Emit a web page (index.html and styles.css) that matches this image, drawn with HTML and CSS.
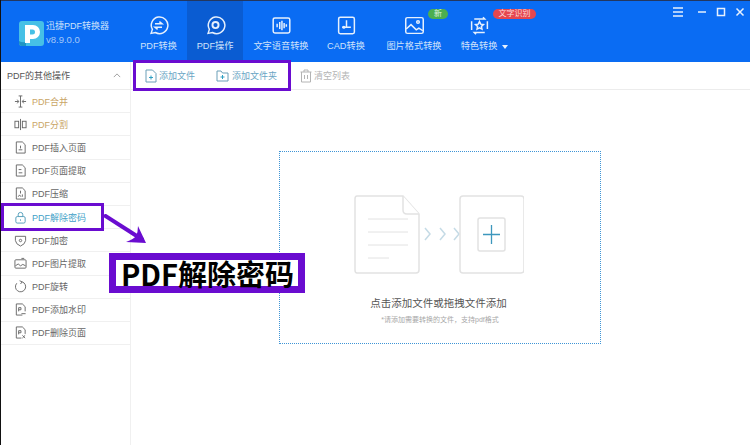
FILE: index.html
```html
<!DOCTYPE html>
<html>
<head>
  <title>迅捷PDF转换器</title>
  <meta charset="utf-8">
  <link rel="stylesheet" href="styles.css">
</head>
<body>
  <div id="app">
    <div id="head">
      <div class="brand">
        <svg class="logo" viewBox="0 0 25 25" width="25" height="25">
          <rect width="25" height="25" rx="3" fill="#46c0e6"/>
          <path d="M0 20 Q3 22 7 21 V25 H3 Q0 25 0 22Z" fill="#1f95c4"/>
          <path fill-rule="evenodd" d="M6 22 V4 H14 A7 7 0 0 1 14 18 H11 V22Z M11 8.500 V13.500 H13.500 A2.500 2.500 0 0 0 13.500 8.500Z" fill="#fff"/>
        </svg>
        <div class="brand-text">
          <div class="brand-name">迅捷PDF转换器</div>
          <div class="brand-ver">v8.9.0.0</div>
        </div>
      </div>
      <div class="tabs">
        <div class="tab tab-a">
          <svg viewBox="0 0 24 24" width="21" height="21"><path d="M3.500 21 L5 16.500 A9.500 9.500 0 1 1 8.500 20Z"/><path d="M8 10 H16 L13 7.500 M16 14 H8 L11 16.500"/></svg>
          <span>PDF转换</span>
        </div>
        <div class="tab tab-b on">
          <svg viewBox="0 0 24 24" width="21" height="21"><path d="M3.500 21 L5 16.500 A9.500 9.500 0 1 1 8.500 20Z"/><circle cx="12" cy="11.500" r="3.500" stroke-width="2.200"/></svg>
          <span>PDF操作</span>
        </div>
        <div class="tab tab-c">
          <svg viewBox="0 0 24 24" width="21" height="21"><rect x="2.500" y="3.500" width="19" height="17" rx="2"/><path d="M7 10 V14 M10 8 V16 M12.500 6.500 V17.500 M15 9 V15 M17.500 10.500 V13.500"/></svg>
          <span>文字语音转换</span>
        </div>
        <div class="tab tab-d">
          <svg viewBox="0 0 24 24" width="21" height="21"><rect x="3" y="2.500" width="18" height="19" rx="2"/><path d="M12 6 V14 M7 14 H17"/><circle cx="9" cy="14" r="1"/></svg>
          <span>CAD转换</span>
        </div>
        <div class="tab tab-e">
          <svg viewBox="0 0 24 24" width="21" height="21"><rect x="2" y="3" width="20" height="18" rx="2"/><circle cx="16" cy="8" r="1.500"/><path d="M2.500 16 L8 11 L14 17 L17 15 L21.500 18"/></svg>
          <span>图片格式转换</span>
          <em class="badge badge-new">新</em>
        </div>
        <div class="tab tab-f">
          <svg viewBox="0 0 24 24" width="21" height="21"><path d="M6 4.500 H18 L16 2.500 M21 7 V16 M18 20 H6 L8 22 M3 17 V7"/><path d="M12 7.500 L13.400 10.500 L16.500 10.900 L14.200 13 L14.800 16.200 L12 14.600 L9.200 16.200 L9.800 13 L7.500 10.900 L10.600 10.500Z"/></svg>
          <span>特色转换</span>
          <i class="caret"></i>
          <em class="badge badge-ocr">文字识别</em>
        </div>
      </div>
      <div class="win">
        <svg class="win-menu" viewBox="0 0 10 10" width="10" height="10"><path d="M0 1 H10 M0 5 H10 M0 9 H10"/></svg>
        <svg viewBox="0 0 10 10" width="10" height="10"><path d="M1 5 H9"/></svg>
        <svg viewBox="0 0 10 10" width="10" height="10"><rect x="1.500" y="1.500" width="7" height="7"/></svg>
        <svg viewBox="0 0 10 10" width="10" height="10"><path d="M1.500 1.500 L8.500 8.500 M8.500 1.500 L1.500 8.500"/></svg>
      </div>
    </div>

    <div id="body">
      <div id="side">
        <div class="side-title">
          <span>PDF的其他操作</span>
          <svg viewBox="0 0 10 6" width="8" height="5"><path d="M1 5 L5 1 L9 5" fill="none" stroke="#8a8a8a"/></svg>
        </div>
        <ul class="side-list">
          <li class="gold"><svg viewBox="0 0 14 14"><path d="M7 1 V13 M5 1 H9 M5 13 H9 M1 7 H5 M9 7 H13 M3.500 5 L5 7 L3.500 9 M10.500 5 L9 7 L10.500 9"/></svg>PDF合并</li>
          <li class="gold"><svg viewBox="0 0 14 14"><rect x="1" y="3.500" width="4" height="7"/><rect x="9" y="3.500" width="4" height="7"/><path d="M7 1 V13"/></svg>PDF分割</li>
          <li><svg viewBox="0 0 14 14"><path d="M2.500 1 H9 L12 4 V13 H2.500Z"/><path d="M7 5 V8 M5 9.500 H9"/></svg>PDF插入页面</li>
          <li><svg viewBox="0 0 14 14"><path d="M2.500 1 H9 L12 4 V13 H2.500Z"/><path d="M5 6 H8 M5 9.500 H9"/></svg>PDF页面提取</li>
          <li><svg viewBox="0 0 14 14"><path d="M2.500 1 H9 L12 4 V13 H2.500Z"/><path d="M7 4 V7 M4.500 10.500 L6 8.500 L7.500 10.500 M9 8 V10.500"/></svg>PDF压缩</li>
          <li class="cur"><svg viewBox="0 0 14 14"><rect x="2" y="6" width="10" height="7" rx="1.500"/><path d="M4.500 6 V4 A2.500 2.500 0 0 1 9.500 4 V6 M7 9 V10.500"/></svg>PDF解除密码</li>
          <li><svg viewBox="0 0 14 14"><path d="M1.500 2.500 H12.500 V7 Q12 11 7 13 Q2 11 1.500 7Z"/><circle cx="7" cy="7" r="1.300"/></svg>PDF加密</li>
          <li><svg viewBox="0 0 14 14"><rect x="1" y="3" width="12" height="9" rx="1"/><path d="M1.500 9.500 L4.500 7.500 L7 9.500 L9.500 8 L12.500 9.500 M8 1.500 H11"/></svg>PDF图片提取</li>
          <li><svg viewBox="0 0 14 14"><path d="M8.800 2 A5.500 5.500 0 1 1 3 3.500 M6 0.800 L8.800 2 L7 4.300"/></svg>PDF旋转</li>
          <li><svg viewBox="0 0 14 14"><path d="M9 13 H2.500 V1 H9 L12 4 V9"/><path d="M5 9 V5 H7.500 V7.300 H5 M8 11.500 H12.500"/></svg>PDF添加水印</li>
          <li><svg viewBox="0 0 14 14"><path d="M8 13 H2.500 V1 H9 L12 4 V8.500"/><path d="M5 9 V5 H7.500 V7.300 H5 M9 10 L12 13 M12 10 L9 13"/></svg>PDF删除页面</li>
        </ul>
      </div>

      <div id="main">
        <div class="tools">
          <div class="tool tool-file">
            <svg viewBox="0 0 12 14" width="12" height="14"><path d="M1 1 H7.500 L11 4.500 V13 H1Z"/><path d="M4 8.500 H8 M6 6.500 V10.500" stroke="#2e9fc2"/></svg>
            添加文件
          </div>
          <div class="tool tool-folder">
            <svg viewBox="0 0 13 13" width="13" height="13"><path d="M1 2 H5 L6.500 4 H12 V12 H1Z"/><path d="M4.500 8 H8.500 M6.500 6 V10" stroke="#2e9fc2"/></svg>
            添加文件夹
          </div>
          <div class="tool tool-clear">
            <svg viewBox="0 0 12 14" width="12" height="14"><path d="M0.500 3 H11.500 M4 3 V1 H8 V3 M1.500 3 V13 H10.500 V3 M4.500 6 V10 M7.500 6 V10"/></svg>
            清空列表
          </div>
        </div>
        <div class="area">
          <div class="drop">
            <svg class="drop-pic" viewBox="0 0 170 79" width="170" height="79">
              <path class="sheet" d="M3 1 H49 L65 19 V75 Q65 78 62 78 H3 Q1 78 1 75 V4 Q1 1 3 1Z"/>
              <path class="sheet" d="M49 1 V15 Q49 19 53 19 H65"/>
              <path class="line" d="M14 24 H54 M14 37 H54 M14 50 H54 M14 63 H35"/>
              <path class="chev" d="M71 33 L76 39 L71 45 M86 33 L91 39 L86 45 M100 33 L105 39 L100 45"/>
              <rect class="sheet" x="106" y="1" width="64" height="77" rx="3"/>
              <rect class="sheet" x="124" y="23" width="27" height="33" rx="2"/>
              <path class="plus" d="M137.500 30 V49 M129 39.500 H146"/>
            </svg>
            <div class="drop-main">点击添加文件或拖拽文件添加</div>
            <div class="drop-sub">*请添加需要转换的文件，支持pdf格式</div>
          </div>
        </div>
      </div>
    </div>

    <div class="mark mark-tools"></div>
    <div class="mark mark-row"></div>
    <svg class="mark-arrow" viewBox="0 0 50 36" width="50" height="36">
      <path d="M1 1 L40 26" fill="none" stroke="#6a0cd0" stroke-width="4"/>
      <path d="M43 29 L23 28 Q31 25 33 22 Q35 18 35 12Z" fill="#6a0cd0"/>
    </svg>
    <div class="mark-label">PDF解除密码</div>
  </div>
</body>
</html>
```

FILE: styles.css
```css
*{
  padding:0;
  margin:0;
  box-sizing:border-box;
}
html,body{
  width:750px;
  height:445px;
  overflow:hidden;
  background:#fff;
}
li{
  list-style:none;
}
#app{
  position:relative;
  width:750px;
  height:445px;
  display:flex;
  flex-direction:column;
  border-left:1px solid #111;
  font-family:"Liberation Sans","Noto Sans CJK SC",sans-serif;
  font-size:9px;
  color:#555;
}

/* header */
#head{
  height:62px;
  flex:none;
  display:flex;
  background:#0a6cf3;
  border-top:1px solid #23375f;
  color:#cfe2fb;
}
.brand{
  width:129px;
  flex:none;
  display:flex;
  align-items:center;
  padding:3px 0 0 18px;
}
.brand-text{
  margin-left:2px;
}
.brand-name{
  font-size:9px;
  line-height:13px;
  white-space:nowrap;
}
.brand-ver{
  font-size:9.500px;
  line-height:13px;
  color:#a5c8f7;
}
.tabs{
  display:flex;
}
.tab{
  position:relative;
  display:flex;
  flex-direction:column;
  align-items:center;
  padding-top:14px;
  font-size:9.200px;
  white-space:nowrap;
}
.tab svg{
  fill:none;
  stroke:#e6f0fd;
  stroke-width:1.700;
}
.tab span{
  margin-top:3px;
  line-height:14px;
}
.tab.on{
  background:#0a5cd2;
}
.tab-a{width:57px;}
.tab-b{width:56px;}
.tab-c{width:76px;}
.tab-d{width:54px;}
.tab-e{width:82px;}
.tab-f{width:48px;}
.caret{
  position:absolute;
  left:47px;
  top:44px;
  border-style:solid;
  border-width:4px 3.500px 0;
  border-color:#e6f0fd transparent transparent;
}
.badge{
  position:absolute;
  top:8px;
  height:10px;
  border-radius:5px;
  font-style:normal;
  font-size:8px;
  line-height:10px;
  text-align:center;
  color:#dff3df;
}
.badge-new{
  left:55px;
  width:20px;
  background:#4cae4f;
}
.badge-ocr{
  left:38px;
  width:43px;
  background:#e5474f;
  color:#fbd9d9;
}
.win{
  position:absolute;
  top:7px;
  right:5px;
  display:flex;
  gap:9px;
}
.win svg{
  fill:none;
  stroke:#e6f0fd;
  stroke-width:1.500;
}
.win-menu{
  margin-right:5px;
}

/* sidebar */
#body{
  flex:1;
  display:flex;
  min-height:0;
}
#side{
  width:130px;
  flex:none;
  border-right:1px solid #f0f0f0;
}
.side-title{
  height:28px;
  display:flex;
  align-items:center;
  justify-content:space-between;
  padding:0 9px 0 6px;
  border-bottom:1px solid #ececec;
  color:#555;
}
.side-list li{
  height:23.200px;
  display:flex;
  align-items:center;
  padding-left:13px;
  border-bottom:1px solid #f0f0f0;
  color:#666;
}
.side-list svg{
  width:13px;
  height:13px;
  margin-right:5px;
  fill:none;
  stroke:#666;
  stroke-width:1;
}
.side-list .gold{
  color:#c9a566;
}
.side-list .cur{
  color:#3f9fc7;
}
.side-list .cur svg{
  stroke:#4f9cb8;
}

/* toolbar */
#main{
  flex:1;
  display:flex;
  flex-direction:column;
}
.tools{
  height:28px;
  flex:none;
  display:flex;
  align-items:center;
  padding-left:14px;
  border-bottom:1px solid #ececec;
  color:#6aa5c4;
}
.tool{
  display:flex;
  align-items:center;
  gap:2px;
}
.tool svg{
  fill:none;
  stroke:#6b9fb8;
  stroke-width:1;
}
.tool-folder{
  margin-left:21px;
  gap:3px;
}
.tool-clear{
  margin-left:23px;
  color:#b4b4b4;
}
.tool-clear svg{
  stroke:#b4b4b4;
}

/* drop area */
.area{
  flex:1;
  padding:61px 0 0 148px;
}
.drop{
  width:322px;
  height:193px;
  border:1px dotted #3f95d6;
  display:flex;
  flex-direction:column;
  align-items:center;
  padding-top:43px;
}
.drop-pic{
  margin-right:3px;
  fill:none;
}
.sheet{
  fill:#fff;
  stroke:#e2e2e2;
  stroke-width:1.500;
}
.line{
  stroke:#e2e2e2;
}
.chev{
  stroke:#c5dbe6;
  stroke-width:1.500;
}
.plus{
  stroke:#3d97bd;
  stroke-width:1.300;
}
.drop-main{
  margin-top:22px;
  margin-right:3px;
  font-size:10.500px;
  line-height:14px;
  color:#555;
}
.drop-sub{
  margin-top:5px;
  font-size:7px;
  line-height:10px;
  color:#a8a8a8;
}

/* purple annotations over the screenshot */
.mark{
  position:absolute;
  border:3px solid #6a0cd0;
}
.mark-tools{
  left:132px;
  top:60px;
  width:158px;
  height:31px;
}
.mark-row{
  left:0;
  top:203px;
  width:103px;
  height:28px;
}
.mark-arrow{
  position:absolute;
  left:102px;
  top:214px;
}
.mark-label{
  position:absolute;
  left:108px;
  top:253px;
  width:196px;
  height:40px;
  border:7px solid #6a0cd0;
  background:#fff;
  font-family:"Noto Sans CJK SC",sans-serif;
  font-weight:700;
  font-size:29px;
  line-height:26px;
  padding-left:1px;
  text-align:center;
  white-space:nowrap;
  color:#000;
}
```
